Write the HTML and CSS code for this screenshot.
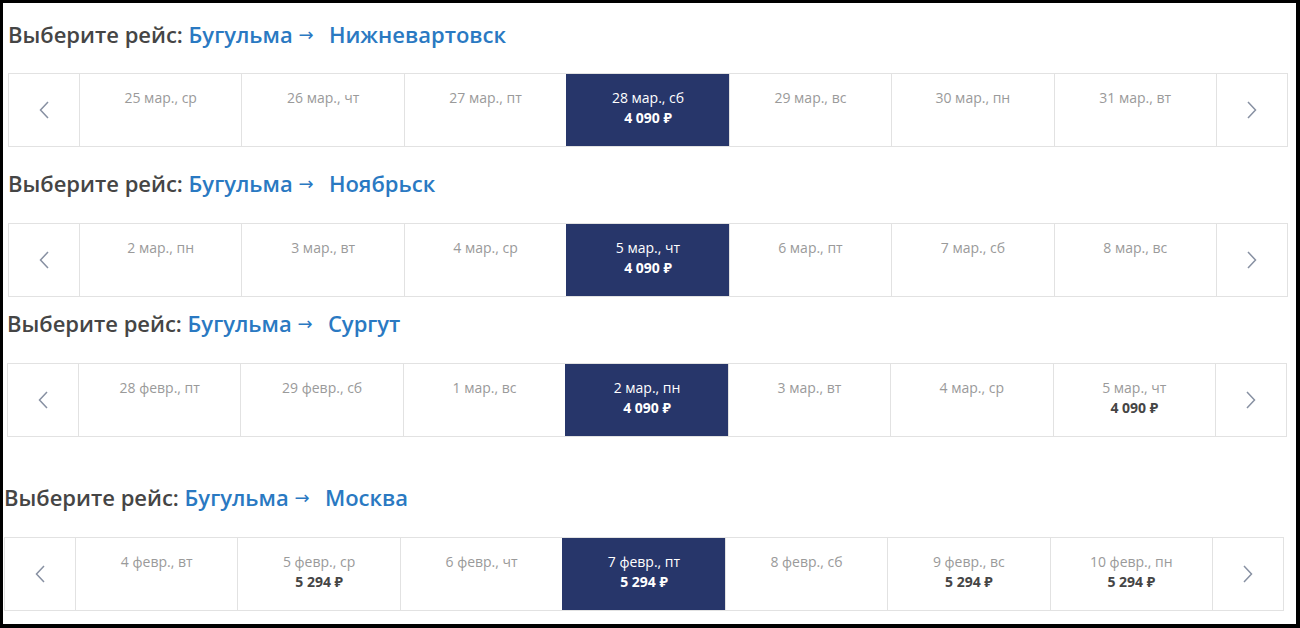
FILE: index.html
```html
<!DOCTYPE html>
<html lang="ru">
<head>
<meta charset="utf-8">
<title>Выберите рейс</title>
<link rel="stylesheet" href="styles.css">
</head>
<body>
<div class="frame">

  <section class="route route--first">
    <h2 class="route-title">Выберите рейс: <span class="city">Бугульма <span class="arrow">→</span>&nbsp; Нижневартовск</span></h2>
    <div class="dates">
      <div class="nav"><svg viewBox="0 0 10 18" width="10" height="18"><path d="M9 1 L1.5 9 L9 17" /></svg></div>
      <div class="day"><div class="day-date">25 мар., ср</div></div>
      <div class="day"><div class="day-date">26 мар., чт</div></div>
      <div class="day"><div class="day-date">27 мар., пт</div></div>
      <div class="day day--active"><div class="day-date">28 мар., сб</div><div class="day-price">4 090 ₽</div></div>
      <div class="day"><div class="day-date">29 мар., вс</div></div>
      <div class="day"><div class="day-date">30 мар., пн</div></div>
      <div class="day"><div class="day-date">31 мар., вт</div></div>
      <div class="nav"><svg viewBox="0 0 10 18" width="10" height="18"><path d="M1 1 L8.5 9 L1 17" /></svg></div>
    </div>
  </section>

  <section class="route route--second">
    <h2 class="route-title">Выберите рейс: <span class="city">Бугульма <span class="arrow">→</span>&nbsp; Ноябрьск</span></h2>
    <div class="dates">
      <div class="nav"><svg viewBox="0 0 10 18" width="10" height="18"><path d="M9 1 L1.5 9 L9 17" /></svg></div>
      <div class="day"><div class="day-date">2 мар., пн</div></div>
      <div class="day"><div class="day-date">3 мар., вт</div></div>
      <div class="day"><div class="day-date">4 мар., ср</div></div>
      <div class="day day--active"><div class="day-date">5 мар., чт</div><div class="day-price">4 090 ₽</div></div>
      <div class="day"><div class="day-date">6 мар., пт</div></div>
      <div class="day"><div class="day-date">7 мар., сб</div></div>
      <div class="day"><div class="day-date">8 мар., вс</div></div>
      <div class="nav"><svg viewBox="0 0 10 18" width="10" height="18"><path d="M1 1 L8.5 9 L1 17" /></svg></div>
    </div>
  </section>

  <section class="route route--third">
    <h2 class="route-title">Выберите рейс: <span class="city">Бугульма <span class="arrow">→</span>&nbsp; Сургут</span></h2>
    <div class="dates">
      <div class="nav"><svg viewBox="0 0 10 18" width="10" height="18"><path d="M9 1 L1.5 9 L9 17" /></svg></div>
      <div class="day"><div class="day-date">28 февр., пт</div></div>
      <div class="day"><div class="day-date">29 февр., сб</div></div>
      <div class="day"><div class="day-date">1 мар., вс</div></div>
      <div class="day day--active"><div class="day-date">2 мар., пн</div><div class="day-price">4 090 ₽</div></div>
      <div class="day"><div class="day-date">3 мар., вт</div></div>
      <div class="day"><div class="day-date">4 мар., ср</div></div>
      <div class="day"><div class="day-date">5 мар., чт</div><div class="day-price">4 090 ₽</div></div>
      <div class="nav"><svg viewBox="0 0 10 18" width="10" height="18"><path d="M1 1 L8.5 9 L1 17" /></svg></div>
    </div>
  </section>

  <section class="route route--fourth">
    <h2 class="route-title">Выберите рейс: <span class="city">Бугульма <span class="arrow">→</span>&nbsp; Москва</span></h2>
    <div class="dates">
      <div class="nav"><svg viewBox="0 0 10 18" width="10" height="18"><path d="M9 1 L1.5 9 L9 17" /></svg></div>
      <div class="day"><div class="day-date">4 февр., вт</div></div>
      <div class="day"><div class="day-date">5 февр., ср</div><div class="day-price">5 294 ₽</div></div>
      <div class="day"><div class="day-date">6 февр., чт</div></div>
      <div class="day day--active"><div class="day-date">7 февр., пт</div><div class="day-price">5 294 ₽</div></div>
      <div class="day"><div class="day-date">8 февр., сб</div></div>
      <div class="day"><div class="day-date">9 февр., вс</div><div class="day-price">5 294 ₽</div></div>
      <div class="day"><div class="day-date">10 февр., пн</div><div class="day-price">5 294 ₽</div></div>
      <div class="nav"><svg viewBox="0 0 10 18" width="10" height="18"><path d="M1 1 L8.5 9 L1 17" /></svg></div>
    </div>
  </section>

</div>
</body>
</html>
```
FILE: styles.css
```css
* { box-sizing: border-box; }

html, body {
  margin: 0;
  padding: 0;
  background: #000;
}

.frame {
  width: 1300px;
  height: 628px;
  background: #fff;
  border-style: solid;
  border-color: #000;
  border-width: 3px 4px 4px 3px;
  font-family: "Open Sans", "Noto Sans", sans-serif;
  overflow: hidden;
}

.route {
  display: flex;
  flex-direction: column;
  padding-left: 5px;
}

.route--first { margin-top: 16px; }
.route--second { margin-top: 21px; }
.route--third { margin-top: 11px; padding-left: 4px; }
.route--fourth { margin-top: 45px; padding-left: 1px; }

.route-title {
  margin: 0 0 24px 0;
  height: 30px;
  font-size: 22px;
  line-height: 30px;
  font-weight: 600;
  color: #454545;
  white-space: nowrap;
}

.route--second .route-title,
.route--third .route-title,
.route--fourth .route-title { margin-bottom: 25px; }

.city {
  color: #2a79c2;
}

.arrow {
  display: inline-block;
  line-height: 0;
  margin-right: 4px;
  font-family: "Noto Sans", "DejaVu Sans", sans-serif;
  font-size: 18px;
  font-weight: 400;
  vertical-align: 2px;
}

.dates {
  display: grid;
  grid-template-columns: 70px repeat(7, 1fr) 71px;
  width: 1280px;
  height: 74px;
  border: 1px solid #e2e2e2;
}

.nav {
  display: flex;
  align-items: center;
  justify-content: center;
}

.dates > * + * {
  border-left: 1px solid #e2e2e2;
}

.nav svg {
  fill: none;
  stroke: #8790a2;
  stroke-width: 1.5;
}

.day {
  padding-top: 14px;
  text-align: center;
}

.day-date {
  font-size: 14px;
  line-height: 20px;
  color: #9a9a9a;
}

.day-price {
  font-size: 14px;
  line-height: 20px;
  font-weight: 700;
  color: #454545;
}

.day--active {
  background: #27366a;
  border-left-color: #27366a;
}

.day--active .day-date,
.day--active .day-price {
  color: #fff;
}
```
